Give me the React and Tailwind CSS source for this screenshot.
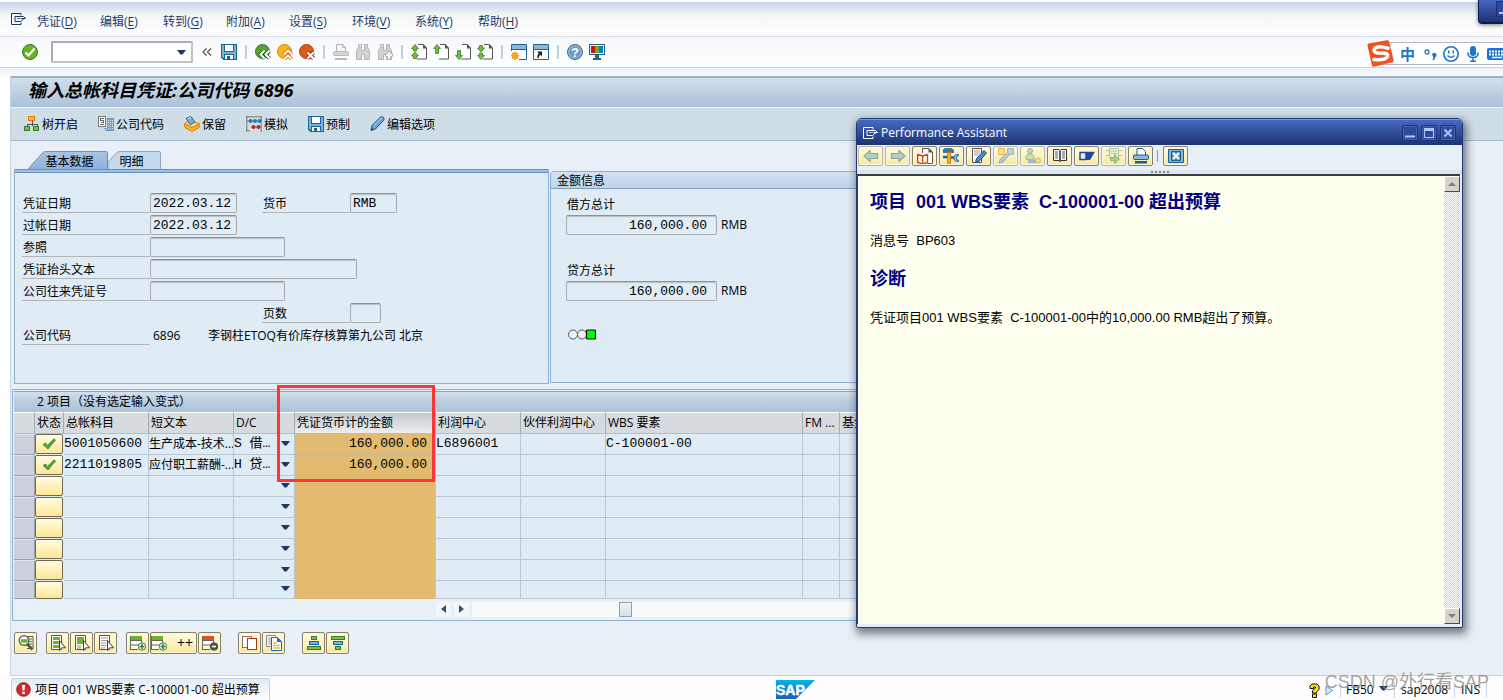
import React from "react";

function Svg({ children, w = 16, h = 16, className = "", crisp = false }) {
  return (
    <svg
      width={w}
      height={h}
      viewBox={`0 0 ${w} ${h}`}
      fill="none"
      aria-hidden="true"
      shapeRendering={crisp ? "crispEdges" : "auto"}
      className={`block shrink-0 ${className}`}
    >
      {children}
    </svg>
  );
}

const DownArrow = ({ className = "" }) => (
  <Svg w={9} h={5} className={className}>
    <path d="M0 0h9L5.500 4.500h-2z" fill="#1f3864" />
  </Svg>
);

const CommandMark = ({ color = "#1f3864" }) => (
  <Svg w={15} h={12}>
    <path d="M10 2.500V.5H.5v11H10V9.500" stroke={color} />
    <path d="M4 3.500h8.500l2 2h-4M4 3.500v5h5.500l3.500-3" stroke={color} />
    <path d="M6 5.500h4" stroke={color} strokeWidth=".7" />
  </Svg>
);

const CheckCircle = () => (
  <Svg>
    <circle cx="8" cy="8" r="7.500" fill="#6cb026" stroke="#2f7d3a" />
    <path d="M3.500 8.500l3 3 6-7" stroke="#fff" strokeWidth="2.200" />
  </Svg>
);

const DoubleLeft = () => (
  <Svg>
    <path d="M7.500 4.500L4 8l3.500 3.500M12 4.500L8.500 8l3.500 3.500" stroke="#555" strokeWidth="1.300" />
  </Svg>
);

const SaveIcon = () => (
  <Svg crisp>
    <path d="M0 0h16v16H2l-2-2z" fill="#1b6595" />
    <path d="M1 1h2v7h10V1h2v14h-2v-5H3v5l-2-2z" fill="#7fb0d6" />
    <path d="M3 8h10v2H3z" fill="#7fb0d6" />
    <path d="M4 1h8v6H4z" fill="#fff" />
    <path d="M4 11h8v4H4z" fill="#fff" />
    <path d="M6 12h3v3H6z" fill="#1b6595" />
  </Svg>
);

const BackIcon = () => (
  <Svg>
    <circle cx="7.500" cy="7.500" r="7" fill="#58a32b" stroke="#2f7d3a" />
    <path d="M9.500 6.500L5.500 10.500l4 4M14.500 6.500l-4 4 4 4" stroke="#2f6b34" strokeWidth="3.600" />
    <path d="M9.500 6.500L5.500 10.500l4 4M14.500 6.500l-4 4 4 4" stroke="#fff" strokeWidth="1.800" />
  </Svg>
);
const ExitIcon = () => (
  <Svg>
    <circle cx="7.500" cy="7.500" r="7" fill="#fbb416" stroke="#dd8407" />
    <path d="M7 10.500l4-4 4 4M7 15.500l4-4 4 4" stroke="#d9730d" strokeWidth="3.600" />
    <path d="M7 10.500l4-4 4 4M7 15.500l4-4 4 4" stroke="#fff" strokeWidth="1.800" />
  </Svg>
);
const CancelIcon = () => (
  <Svg>
    <circle cx="7.500" cy="7.500" r="7" fill="#dc5a1c" stroke="#b5400f" />
    <path d="M8.500 8.500l6 6M14.500 8.500l-6 6" stroke="#9f3410" strokeWidth="4" />
    <path d="M8.500 8.500l6 6M14.500 8.500l-6 6" stroke="#fff" strokeWidth="2.200" />
  </Svg>
);

const GreyPrinter = () => (
  <Svg>
    <path d="M3.500 7V.5h6l3 3V7" stroke="#b5b5b5" fill="#f6f6f6" />
    <path d="M9.500.5v3h3" stroke="#b5b5b5" />
    <rect x=".5" y="7.500" width="15" height="4" rx="1" fill="#d5d5d5" stroke="#b9b9b9" />
    <path d="M2 14h12v2H2z" fill="#b9b9b9" />
  </Svg>
);
const Binoculars = ({ plus = false }) => (
  <Svg>
    <path
      d="M3.500.5h3v2h-1M3.500.5v3l-2 3v9h5v-5h3v5h5v-9l-2-3v-3h-3v6h-3v-6z"
      fill="#d2d2d2"
      stroke="#b5b5b5"
    />
    {plus && (
      <path d="M10.500 7.500h3v2h2v3h-2v3h-3v-3h-2v-3h2z" fill="#f5f5f5" stroke="#b5b5b5" />
    )}
  </Svg>
);

const PageIcon = ({ kind }) => (
  <Svg>
    <path d="M7 .5h5.500l3 3.500v11H6" stroke="#555" fill="#fff" />
    <path d="M12 0v4.500h4z" fill="#555" />
    {kind === "first" && (
      <g fill="#7cbb2b" stroke="#2f7d3a" strokeWidth=".8">
        <path d="M4 .5L.5 4.500h2V7h3V4.500h2z" />
        <path d="M4 8L.5 12h2v2.500h3V12h2z" />
      </g>
    )}
    {kind === "prev" && (
      <path d="M4 .5L.5 4.500h2V9.500h3V4.500h2z" fill="#7cbb2b" stroke="#2f7d3a" strokeWidth=".8" />
    )}
    {kind === "next" && (
      <path d="M4 15.500L.5 11.500h2V6.500h3v5h2z" fill="#7cbb2b" stroke="#2f7d3a" strokeWidth=".8" />
    )}
    {kind === "last" && (
      <g fill="#7cbb2b" stroke="#2f7d3a" strokeWidth=".8">
        <path d="M4 8L.5 4h2V1.500h3V4h2z" />
        <path d="M4 15.500L.5 11.500h2V9h3v2.500h2z" />
      </g>
    )}
  </Svg>
);

const WindowIcon = ({ star = false }) => (
  <Svg>
    <path d="M.5.5h15v15H.5z" fill="#fff" stroke="#1b6595" />
    <path d="M1 1h14v4H1z" fill="#8fb6d8" />
    <path d="M1 5.500h14" stroke="#1b6595" />
    {star ? (
      <g>
        <path d="M0 7h8v9H0z" fill="#fff" />
        <path
          d="M4 7.500l1 2 2-.8-.8 2 2 1-2 1 .8 2-2-.7-1 2-1-2-2 .7.800-2-2-1 2-1-.8-2 2 .8z"
          fill="#fba414"
          stroke="#ee8a10"
          strokeWidth=".6"
        />
      </g>
    ) : (
      <path d="M4 7.500h5v5L7.300 10.800Q5.500 12 6 14H4.300Q3.500 11 5.700 9.200z" fill="#222" />
    )}
  </Svg>
);

const HelpIcon = () => (
  <Svg>
    <circle cx="8" cy="8" r="7.500" fill="#6e9cc4" stroke="#3a6b96" />
    <circle cx="8" cy="8" r="6.300" stroke="#b9d1e6" strokeWidth=".7" />
    <text x="8" y="12.500" textAnchor="middle" fontSize="13" fontWeight="700" fill="#fff" fontFamily="Liberation Sans">?</text>
  </Svg>
);
const MonitorIcon = () => (
  <Svg crisp>
    <path d="M0 0h16v11H0z" fill="#1b6595" />
    <path d="M1 1h14v9H1z" fill="#eaf2f8" />
    <path d="M2 2h4v7H2z" fill="#d31010" />
    <path d="M6 2h4v7H6z" fill="#63b020" />
    <path d="M10 2h4v7h-4z" fill="#1a7cc9" />
    <path d="M6 11h4v3H6zM4 14h8v2H4z" fill="#1b6595" />
  </Svg>
);

const TreeIcon = () => (
  <Svg crisp>
    <path d="M8 5v5M3 11V8h10v3" stroke="#555" />
    <rect x="4.500" y=".5" width="6" height="4" fill="#fcc21b" stroke="#e2761b" />
    <rect x=".5" y="10.500" width="5" height="4" fill="#7cbb2b" stroke="#2f7d3a" />
    <rect x="9.500" y="10.500" width="5" height="4" fill="#7cbb2b" stroke="#2f7d3a" />
  </Svg>
);
const CompanyIcon = () => (
  <Svg crisp>
    <rect x="9" y="2" width="7" height="13" fill="#6d9fca" />
    <path d="M10 4h1M12 4h1M14 4h1M10 6h1M12 6h1M14 6h1M10 8h1M12 8h1M14 8h1M10 10h1M12 10h1M14 10h1M10 12h1M12 12h1M14 12h1" stroke="#d7e7f3" />
    <rect x=".5" y=".5" width="7" height="10" fill="#fff" stroke="#777" />
    <path d="M5.500 2.500h-3v2h3v2h-3M2 8.500h4" stroke="#666" />
    <path d="M6 12h3M7 14h2" stroke="#6d9fca" />
  </Svg>
);
const HoldIcon = () => (
  <Svg>
    <path d="M.8 7.500L8 11.500l7.200-4v4L8 15.500l-7.200-4z" fill="#fbb416" stroke="#e07a12" />
    <path d="M.8 7.500l5-3 9.400 3L8 11.500z" fill="#fde08a" stroke="#e07a12" />
    <path d="M2 2.500L7 .5l4 5.500-4.500 3z" fill="#7fa9cf" stroke="#34648f" />
    <path d="M3.500 3l3.500-1.500" stroke="#d6e6f3" />
  </Svg>
);
const SimulateIcon = () => (
  <Svg>
    <path d="M.8 0v15.500M0 .8h16M15.200 0v16M0 14.800h4M1 5h14M5 11h10" stroke="#777" />
    <g fill="#2a78b0">
      <circle cx="4.500" cy="5" r="2" /><circle cx="9" cy="5" r="2" /><circle cx="13.500" cy="5" r="2" />
    </g>
    <g fill="#c02516">
      <circle cx="7.500" cy="11" r="2" /><circle cx="12.500" cy="11" r="2" />
    </g>
  </Svg>
);
const PencilIcon = () => (
  <Svg w={15}>
    <path d="M1 14.500l1-5L10.500 1l2-.5 1.700 1.700-.5 2L5.500 13z" fill="#6fa3cf" stroke="#1e5f8f" />
    <path d="M4 9.500L11.500 2" stroke="#c1d9ec" />
    <path d="M1 14.500l.8-3 2.400 2.300z" fill="#1e4a70" />
  </Svg>
);

const GreenCheck = () => (
  <Svg w={15} h={12}>
    <path d="M1 6.500l2.500-1.500 2 2.500L12 .8l1.500 1.200L6 11z" fill="#58a836" stroke="#2f7d3a" strokeWidth=".8" />
  </Svg>
);

const DetailIcon = () => (
  <Svg>
    <path d="M7 1.500h8v12H9" stroke="#555" fill="#fff" />
    <path d="M10 4h4M11 6.500h3M11 9h3" stroke="#6fb32a" strokeWidth="1.500" />
    <circle cx="6" cy="5.500" r="4.700" fill="#fff" stroke="#666" strokeWidth="1.600" />
    <path d="M3 4.200h6.500v3.500H3z" fill="#6fb32a" />
    <path d="M9 9l5.500 5.500" stroke="#555" strokeWidth="2.800" />
  </Svg>
);
const SelectIcon = ({ kind }) => (
  <Svg>
    <path d="M1.500.5h10v14h-10z" fill="#fff" stroke="#555" />
    {kind === "all" && <path d="M3 3.500h7M3 7.500h6M3 11.500h6" stroke="#6fb32a" strokeWidth="3" />}
    {kind === "block" && (
      <g>
        <path d="M3 2h7v7H3z" fill="#6fb32a" />
        <path d="M3 11h4M3 13h4" stroke="#888" />
      </g>
    )}
    {kind === "none" && <path d="M3 3h7M3 5.500h7M3 8h5M3 10.500h5M3 13h4" stroke="#999" />}
    <path d="M9.500 5.500v10l2.200-2.700h3.800z" fill="#fff" stroke="#444" />
  </Svg>
);
const RowIcon = ({ remove = false }) => (
  <Svg>
    <path d="M1 5h11v9H1z" fill="#fff" opacity=".7" />
    <path d="M.5 1v14M0 5.500h12M1 10h10M1 14.500h7M11.500 5v4" stroke="#666" />
    <path d="M1 1h11v4H1z" fill={remove ? "#e2541b" : "#6fb32a"} />
    <circle cx="12" cy="11.500" r="3.700" fill={remove ? "#555" : "#fff"} stroke={remove ? "#444" : "#2f7d3a"} />
    <path d={remove ? "M10 11.500h4" : "M9.500 11.500h5M12 9v5"} stroke={remove ? "#fff" : "#2f7d3a"} strokeWidth="1.600" />
  </Svg>
);
const CutIcon = () => (
  <Svg crisp>
    <rect x=".5" y="1.500" width="9" height="11" fill="#fff" stroke="#777" />
    <rect x="5.500" y="3.500" width="9" height="11" fill="#fff" stroke="#b3301a" />
  </Svg>
);
const PasteIcon = () => (
  <Svg>
    <path d="M.5.5h9v11h-9z" fill="#fff" stroke="#888" />
    <path d="M2 3h5M2 5h4M2 7h4M2 9h4" stroke="#999" />
    <path d="M5.500 2.500h6l4 4v9h-10z" fill="#fff" stroke="#1a6aa6" />
    <path d="M11 2.500v4.500h4.500z" fill="#1a6aa6" />
    <path d="M7 8h4M7 10.500h7M7 13h7" stroke="#e7c13a" strokeWidth="1.400" />
  </Svg>
);
const SortIcon = ({ down = false }) => (
  <Svg>
    <rect x={down ? 1.5 : 5.5} y="1.500" width={down ? 13 : 5} height="3" fill="#7fbf3a" stroke="#2f7d3a" />
    <rect x="3.500" y="6.500" width="9" height="3" fill="#7fb0d6" stroke="#1b6595" />
    <rect x={down ? 5.5 : 1.5} y="11.500" width={down ? 5 : 13} height="3" fill="#7fbf3a" stroke="#2f7d3a" />
  </Svg>
);

const ArrowH = ({ flip = false }) => (
  <Svg className={flip ? "rotate-180" : ""}>
    <path d="M1 8l6-5.500v3h7.500v5H7v3z" fill="#b3cfc0" stroke="#85a9a0" strokeWidth="1.200" />
  </Svg>
);
const BookPage = () => (
  <Svg>
    <path d="M5.500 5V.5h6.500l3.500 3.500v11.500h-5" fill="#fff" stroke="#555" />
    <path d="M11.500 0v4.500H16z" fill="#555" />
    <path d="M.7 6.500l5 1.500 4.800-1.500v8L5.700 16l-5-1.500z" fill="#fff" stroke="#d2471b" strokeWidth="1.400" />
    <path d="M5.700 8v7.500" stroke="#d2471b" strokeWidth="1.400" />
  </Svg>
);
const ToolsIcon = () => (
  <Svg w={17}>
    <path d="M0 2l2-1.500h6.500l2 1.500v2.500H0z" fill="#2f7fae" stroke="#1b5f8c" strokeWidth=".7" />
    <path d="M4.500 4.500h3v11h-3z" fill="#fbb416" stroke="#e07a12" />
    <path d="M0 9h4M8 9.500h3" stroke="#1b6595" strokeWidth="2.500" />
    <path d="M16 7a3.500 3.500 0 1 0 0 6l-2-1.200q-1.500-1.600 0-3.600z" fill="#9ec3de" stroke="#1b6595" />
  </Svg>
);
const EditPage = () => (
  <Svg>
    <path d="M1.500.5h9v14h-9z" fill="#fff" stroke="#555" />
    <path d="M3 3h6M3 5h6M3 7h4" stroke="#999" />
    <path d="M4.500 14.500l1-4L13 2.500l2.500 2.500L8.500 13z" fill="#4f8fc0" stroke="#1a4f7c" />
  </Svg>
);
const FadedEdit = () => (
  <Svg>
    <path d="M.5.5h6v6h-6z" fill="#f6e08d" stroke="#e0b860" />
    <path d="M9.500.5h6v6h-6z" fill="#bcd3dd" stroke="#9ab5bf" />
    <path d="M1 15l1.500-4L9.500 4.500l2 2L5 14z" fill="#b9cdd0" stroke="#8ea7aa" />
  </Svg>
);
const FadedPerson = () => (
  <Svg>
    <circle cx="5" cy="3" r="2.500" fill="#c5d3c0" stroke="#9aab99" />
    <path d="M1 11.500V8l2-2h4l2 2v3.500z" fill="#cfdcab" stroke="#a6b792" />
    <path d="M3 13.500h8" stroke="#9cbac4" strokeWidth="3" />
    <circle cx="13" cy="12.500" r="2.500" fill="#f7dc90" stroke="#e4b267" />
  </Svg>
);
const OpenBook = () => (
  <Svg>
    <path d="M1.500 1.500h5.500l1 1 1-1h5.500v11H9l-1 1-1-1H1.500z" fill="#fff" stroke="#333" />
    <path d="M8 2.500v11" stroke="#333" strokeWidth="1.600" />
    <path d="M3 4h3M3 6h3M3 8h3M3 10h3M10 4h3M10 6h3M10 8h3M10 10h3" stroke="#555" />
  </Svg>
);
const BlueShape = () => (
  <Svg>
    <path d="M1 4.500h6v7H1z" fill="#dfe9f7" stroke="#24459a" strokeWidth="1.500" />
    <path d="M7 3.700h9L11 12H7z" fill="#24459a" />
  </Svg>
);
const FadedList = () => (
  <Svg>
    <path d="M3.500.5h9v9h-9z" fill="#f8f3cf" stroke="#aebaae" />
    <path d="M0 2.500h3M12.500 2.500H16M0 7.500h3M12.500 7.500H16M5 3h6M5 5.500h6" stroke="#aebaae" />
    <path d="M4.500 9.500h4v-3l5 4.500-5 4.500v-3h-4z" fill="#acd08a" stroke="#87b377" />
  </Svg>
);
const BluePrinter = () => (
  <Svg>
    <path d="M4 7V.5h5.500l3 3V7" fill="#fff" stroke="#1b5f8c" />
    <rect x=".5" y="7" width="15" height="4.500" rx="1" fill="#8fb6d8" stroke="#1b5f8c" />
    <path d="M2 13h12v2.500H2z" fill="#1b5f8c" />
  </Svg>
);
const ClosePanelIcon = () => (
  <Svg>
    <path d="M.5 1.500h15v13H.5z" fill="#8fb6d8" stroke="#1b5f8c" />
    <path d="M3.500 3.500h9v9h-9z" fill="#5e93bf" stroke="#1b5f8c" />
    <path d="M5 5l6 6M11 5l-6 6" stroke="#fff" strokeWidth="2" />
  </Svg>
);

const menus = [
  ["凭证", "D"],
  ["编辑", "E"],
  ["转到", "G"],
  ["附加", "A"],
  ["设置", "S"],
  ["环境", "V"],
  ["系统", "Y"],
  ["帮助", "H"],
];

const ToolSep = () => <span className="mx-[2px] h-[14px] w-[2px] bg-[#bcd0e4]" />;

function IconButton({ label, children }) {
  return (
    <button type="button" aria-label={label} className="flex h-4 w-4 shrink-0 items-center justify-center">
      {children}
    </button>
  );
}

function MenuBar() {
  return (
    <nav aria-label="菜单" className="flex h-[35px] shrink-0 items-center border-b border-[#d9dfe8] bg-linear-to-b from-[#c6d4e8] via-[#f4f6f9] via-40% to-white pt-[6px] pl-[11px] text-[#1f3864]">
      <div className="mb-[6px] w-[26px]">
        <CommandMark />
      </div>
      {menus.map(([name, key]) => (
        <button key={key} type="button" className="w-[63px] shrink-0 text-left leading-4 whitespace-nowrap">
          {name}(<span className="underline underline-offset-2">{key}</span>)
        </button>
      ))}
    </nav>
  );
}

function StandardToolbar() {
  return (
    <div className="flex h-[31px] shrink-0 items-center gap-[6px] border-b border-[#cfd2d8] bg-linear-to-b from-[#f7f8fa] to-white pl-[22px]">
      <IconButton label="回车"><CheckCircle /></IconButton>
      <div className="ml-[7px] flex h-[22px] w-[142px] items-center rounded-[2px] border-2 border-[#a9adb1] border-r-[#bfc3c7] border-b-[#bfc3c7] bg-white pr-[5px]">
        <input aria-label="命令字段" className="h-full min-w-0 flex-1 bg-transparent px-1 outline-none" />
        <button type="button" aria-label="命令历史"><DownArrow /></button>
      </div>
      <IconButton label="收起"><DoubleLeft /></IconButton>
      <IconButton label="保存"><SaveIcon /></IconButton>
      <ToolSep />
      <IconButton label="返回"><BackIcon /></IconButton>
      <IconButton label="退出"><ExitIcon /></IconButton>
      <IconButton label="取消"><CancelIcon /></IconButton>
      <ToolSep />
      <IconButton label="打印"><GreyPrinter /></IconButton>
      <IconButton label="查找"><Binoculars /></IconButton>
      <IconButton label="继续查找"><Binoculars plus /></IconButton>
      <ToolSep />
      <IconButton label="第一页"><PageIcon kind="first" /></IconButton>
      <IconButton label="上一页"><PageIcon kind="prev" /></IconButton>
      <IconButton label="下一页"><PageIcon kind="next" /></IconButton>
      <IconButton label="最后一页"><PageIcon kind="last" /></IconButton>
      <ToolSep />
      <IconButton label="新建会话"><WindowIcon star /></IconButton>
      <IconButton label="快捷方式"><WindowIcon /></IconButton>
      <ToolSep />
      <IconButton label="帮助"><HelpIcon /></IconButton>
      <IconButton label="定制布局"><MonitorIcon /></IconButton>
    </div>
  );
}

const actions = [
  ["树开启", TreeIcon],
  ["公司代码", CompanyIcon],
  ["保留", HoldIcon],
  ["模拟", SimulateIcon],
  ["预制", SaveIcon],
  ["编辑选项", PencilIcon],
];

function Field({ id, width, value = "", right = false }) {
  return (
    <input
      id={id}
      readOnly
      defaultValue={value}
      className={`h-5 rounded-[2px] border border-[#a9adb1] border-t-[#8f9396] bg-[#e1ecf5] px-[2px] font-['Liberation_Mono','Noto_Sans_CJK_SC',monospace] text-[13px] leading-4 text-black shadow-[inset_0_1px_1px_#b9c2c9] outline-none ${width} ${right ? "pr-[9px] text-right" : ""}`}
    />
  );
}

function FieldLabel({ htmlFor, width = "w-[128px]", children }) {
  return (
    <label htmlFor={htmlFor} className={`flex h-5 shrink-0 items-end border-b border-[#b3b6b9] pl-px leading-[17px] ${width}`}>
      {children}
    </label>
  );
}

function Tabs() {
  return (
    <div role="tablist" className="flex h-[18px] pl-[17px]">
      <button role="tab" aria-selected="true" type="button" className="relative h-[18px] w-[80px]">
        <svg className="absolute inset-0" width="80" height="18" viewBox="0 0 80 18" aria-hidden="true">
          <defs>
            <linearGradient id="tabOn" x1="0" y1="0" x2="0" y2="1">
              <stop offset="0" stopColor="#a9c5e4" />
              <stop offset="1" stopColor="#8db2db" />
            </linearGradient>
          </defs>
          <path d="M0 18L14 2.500Q15.500.5 18 .5H78.500Q79.500.5 79.500 2V18" fill="url(#tabOn)" stroke="#6d93ba" />
        </svg>
        <span className="relative block pl-[3px] leading-[22px]">基本数据</span>
      </button>
      <button role="tab" aria-selected="false" type="button" className="relative h-[18px] w-[53px]">
        <svg className="absolute inset-0" width="53" height="18" viewBox="0 0 53 18" aria-hidden="true">
          <path d="M0 18V11L8 2.500Q9.500.5 12 .5H51.500Q52.500.5 52.500 2V18" fill="#c3d9ec" stroke="#84a5c6" />
        </svg>
        <span className="relative block pr-[6px] leading-[22px]">明细</span>
      </button>
    </div>
  );
}

function BasicData() {
  return (
    <section className="w-[535px] shrink-0 border-x border-b border-[#8fb1d3] bg-[#dfebf5] pb-[36px]">
      <div className="h-1 border-y border-[#6590bd] bg-[#9fc0e0]" />
      <div className="flex flex-col gap-[2px] pt-5 pl-[7px]">
        <div className="flex">
          <FieldLabel htmlFor="docDate">凭证日期</FieldLabel>
          <Field id="docDate" width="w-[87px]" value="2022.03.12" />
          <span className="w-[25px]" />
          <FieldLabel htmlFor="currency" width="w-[88px]">货币</FieldLabel>
          <Field id="currency" width="w-[47px]" value="RMB" />
        </div>
        <div className="flex">
          <FieldLabel htmlFor="postDate">过帐日期</FieldLabel>
          <Field id="postDate" width="w-[87px]" value="2022.03.12" />
        </div>
        <div className="flex">
          <FieldLabel htmlFor="reference">参照</FieldLabel>
          <Field id="reference" width="w-[135px]" />
        </div>
        <div className="flex">
          <FieldLabel htmlFor="headText">凭证抬头文本</FieldLabel>
          <Field id="headText" width="w-[207px]" />
        </div>
        <div className="flex">
          <FieldLabel htmlFor="crossNo">公司往来凭证号</FieldLabel>
          <Field id="crossNo" width="w-[135px]" />
        </div>
        <div className="flex pl-[240px]">
          <FieldLabel htmlFor="pages" width="w-[88px]">页数</FieldLabel>
          <Field id="pages" width="w-[31px]" />
        </div>
        <div className="flex">
          <div className="flex h-5 w-[128px] shrink-0 items-end border-b border-[#b3b6b9] pl-px leading-[17px]">公司代码</div>
          <span className="w-[58px] pl-[3px] leading-[22px]">6896</span>
          <span className="leading-[22px] whitespace-nowrap">李钢柱ETOQ有价库存核算第九公司 北京</span>
        </div>
      </div>
    </section>
  );
}

function AmountInfo() {
  return (
    <section className="mt-[2px] mb-px ml-px min-w-0 flex-1 rounded-tl-[3px] border border-[#8fb1d3] bg-[#dfebf5]">
      <h2 className="h-[17px] border-b border-[#7f9fc2] bg-linear-to-b from-[#d3e2f0] to-[#bdd4ea] pl-[6px] leading-[18px]">金额信息</h2>
      <div className="flex flex-col pl-[15px]">
        <label htmlFor="debit" className="mt-[7px] h-[19px] pl-px leading-[17px]">借方总计</label>
        <div className="flex items-center gap-[4px]">
          <Field id="debit" width="w-[151px]" value="160,000.00" right />
          <span>RMB</span>
        </div>
        <label htmlFor="credit" className="mt-[27px] h-[19px] pl-px leading-[17px]">贷方总计</label>
        <div className="flex items-center gap-[4px]">
          <Field id="credit" width="w-[151px]" value="160,000.00" right />
          <span>RMB</span>
        </div>
        <div className="mt-[28px] pl-[2px]">
          <Svg w={28} h={11}>
            <circle cx="5" cy="5.500" r="4.500" fill="#f1f1f1" stroke="#555" />
            <circle cx="14" cy="5.500" r="4.500" fill="#f1f1f1" stroke="#555" />
            <rect x="18.500" y="1" width="9" height="9" rx="1" fill="#00ff00" stroke="#111" strokeWidth="1.200" />
          </Svg>
        </div>
      </div>
    </section>
  );
}

const headers = ["", "状态", "总帐科目", "短文本", "D/C", "凭证货币计的金额", "利润中心", "伙伴利润中心", "WBS 要素", "FM ...", "基金"];
const rows = [
  { ok: true, account: "5001050600", text: "生产成本-技术...", dc: "S 借…", amount: "160,000.00", profit: "L6896001", wbs: "C-100001-00" },
  { ok: true, account: "2211019805", text: "应付职工薪酬-...", dc: "H 贷…", amount: "160,000.00" },
  {}, {}, {}, {}, {}, {},
];

const cell = "overflow-hidden border-r border-b border-[#b9c7d4] p-0 whitespace-nowrap";
const mono = "font-['Liberation_Mono','Noto_Sans_CJK_SC',monospace] text-[13px] leading-4";

function Items() {
  return (
    <section className="relative mt-[5px] mr-[80px] ml-px border border-[#8fb1d3] p-px">
      <h2 className="h-[21px] border-t border-[#8aa5bf] bg-linear-to-b from-[#d2e0ee] via-[#b9cddc] to-[#abc4de] pl-[23px] leading-[20px]">
        2 项目（没有选定输入变式）
      </h2>
      <div className="overflow-hidden">
        <table className="w-full table-fixed border-separate border-spacing-0">
          <colgroup>
            <col className="w-[21px]" />
            <col className="w-[29px]" />
            <col className="w-[85px]" />
            <col className="w-[85px]" />
            <col className="w-[61px]" />
            <col className="w-[141px]" />
            <col className="w-[85px]" />
            <col className="w-[85px]" />
            <col className="w-[197px]" />
            <col className="w-[37px]" />
            <col />
          </colgroup>
          <thead>
            <tr className="h-[22px]">
              {headers.map((h, i) => (
                <th
                  key={h + i}
                  scope="col"
                  className={`overflow-hidden border-t border-r border-b border-t-white border-r-[#a3abb3] border-b-[#b4bcc4] p-0 pl-[2px] text-left leading-4 font-normal whitespace-nowrap ${i === 5 ? "bg-linear-to-b from-[#c3c8cc] to-[#eceef0]" : "bg-[#d6dbdf]"}`}
                >
                  {h}
                </th>
              ))}
            </tr>
          </thead>
          <tbody>
            {rows.map((r, i) => (
              <tr key={i} className={i === 7 ? "h-[18px]" : "h-[21px]"}>
                <td className="border-t border-r border-b border-t-[#e1e4ea] border-r-[#9aa0ab] border-b-[#9aa0ab] bg-[#cbd0da] p-0" />
                <td className="bg-[#dfebf5] p-0 align-top">
                  <button
                    type="button"
                    aria-label={`状态 ${i + 1}`}
                    className={`flex w-[28px] items-center justify-center rounded-[2px] border border-[#6f6a58] bg-linear-to-b from-[#fffbe3] via-[#fff2b8] to-[#fde794] ${i === 7 ? "h-[18px]" : "h-5"}`}
                  >
                    {r.ok && <GreenCheck />}
                  </button>
                </td>
                <td className={`${cell} ${mono} bg-[#dfebf5]`}>{r.account}</td>
                <td className={`${cell} bg-[#dfebf5] leading-4`}>{r.text}</td>
                <td className={`${cell} bg-[#dfebf5]`}>
                  <div className="flex items-center">
                    <select
                      aria-label={`借贷 ${i + 1}`}
                      className={`${mono} min-w-0 flex-1 appearance-none bg-transparent outline-none`}
                    >
                      <option>{r.dc || ""}</option>
                    </select>
                    <DownArrow className="mr-1 mb-[2px]" />
                  </div>
                </td>
                <td className={`overflow-hidden border-r border-b border-r-[#b9c7d4] p-0 pr-2 text-right whitespace-nowrap ${mono} bg-[#e2bb70] ${i < 2 ? "border-b-[#c3ba95]" : "border-b-[#e2bb70]"}`}>
                  {r.amount}
                </td>
                <td className={`${cell} ${mono} bg-[#dfebf5]`}>{r.profit}</td>
                <td className={`${cell} bg-[#dfebf5]`} />
                <td className={`${cell} ${mono} bg-[#dfebf5]`}>{r.wbs}</td>
                <td className={`${cell} bg-[#dfebf5]`} />
                <td className={`${cell} bg-[#dfebf5]`} />
              </tr>
            ))}
          </tbody>
        </table>
      </div>
      <div className="flex h-5 items-center gap-[3px] pl-[422px]">
        <button type="button" aria-label="向左滚动" className="flex h-[15px] w-[15px] items-center justify-center bg-[#f4f7fa]">
          <Svg w={5} h={8}><path d="M5 0v8L0 4z" fill="#33536b" /></Svg>
        </button>
        <button type="button" aria-label="向右滚动" className="flex h-[15px] w-[15px] items-center justify-center bg-[#f4f7fa]">
          <Svg w={5} h={8}><path d="M0 0v8l5-4z" fill="#33536b" /></Svg>
        </button>
        <div className="flex h-[15px] flex-1 bg-[#fafafa] pl-[147px]">
          <span className="h-[15px] w-[13px] border border-[#8e9eb0] bg-linear-to-b from-[#f0f4f8] to-[#d3dfeb]" />
        </div>
      </div>
      <div className="pointer-events-none absolute -top-[5px] left-[264px] h-[97px] w-[158px] border-3 border-[#fb3636]" />
    </section>
  );
}

const yellow =
  "flex items-center rounded-[2px] border bg-linear-to-b from-[#fffbe0] via-[#fdf3c0] to-[#f8e69a] shadow-[inset_0_0_0_1px_#fff8d6]";

function RowButton({ label, wide = false, children }) {
  return (
    <button
      type="button"
      aria-label={label}
      className={`${yellow} h-[22px] border-[#85806c] ${wide ? "w-[47px] justify-between pr-[3px]" : "w-[23px] justify-center"}`}
    >
      {children}
    </button>
  );
}

function RowToolbar() {
  return (
    <div className="flex gap-px pt-[11px] pl-[3px]">
      <RowButton label="明细"><DetailIcon /></RowButton>
      <span className="w-[7px]" />
      <RowButton label="全选"><SelectIcon kind="all" /></RowButton>
      <RowButton label="选择块"><SelectIcon kind="block" /></RowButton>
      <RowButton label="取消选择"><SelectIcon kind="none" /></RowButton>
      <span className="w-[7px]" />
      <RowButton label="插入行"><RowIcon /></RowButton>
      <RowButton label="插入多行" wide>
        <RowIcon />
        <span className="text-[14px] leading-4">++</span>
      </RowButton>
      <RowButton label="删除行"><RowIcon remove /></RowButton>
      <span className="w-[15px]" />
      <RowButton label="复制"><CutIcon /></RowButton>
      <RowButton label="粘贴"><PasteIcon /></RowButton>
      <span className="w-[15px]" />
      <RowButton label="升序"><SortIcon /></RowButton>
      <RowButton label="降序"><SortIcon down /></RowButton>
    </div>
  );
}

const helpTools = [
  ["后退", () => <ArrowH />, true],
  ["前进", () => <ArrowH flip />, true],
  ["应用帮助", BookPage],
  ["技术信息", ToolsIcon],
  ["编辑文档", EditPage],
  ["定制", FadedEdit, true],
  ["权限", FadedPerson, true],
  ["词汇", OpenBook],
  ["SAP 门户", BlueShape],
  ["转换", FadedList, true],
  ["打印", BluePrinter],
];

function WinButton({ label, children }) {
  return (
    <button type="button" aria-label={label} className="flex h-4 w-4 items-center justify-center rounded-[2px] border border-[#1a3273] bg-[#2c4a9c] shadow-[inset_0_0_0_1px_#4563b4]">
      {children}
    </button>
  );
}

function ScrollButton({ label, down = false }) {
  return (
    <button type="button" aria-label={label} className="flex h-4 w-4 items-center justify-center border border-t-white border-r-[#4a4a4a] border-b-[#4a4a4a] border-l-white bg-[#d6d3cc]">
      <Svg w={8} h={4} className={down ? "rotate-180" : ""}>
        <path d="M4 0l4 4H0z" fill="#808080" />
      </Svg>
    </button>
  );
}

function PerformanceAssistant() {
  return (
    <section
      aria-label="Performance Assistant"
      className="absolute top-[118px] right-[40px] flex h-[510px] w-[607px] flex-col overflow-hidden rounded-t-[6px] rounded-b-[2px] border border-[#1d3a78] bg-[#e8eff6] shadow-[2px_4px_9px_2px_rgba(20,30,50,0.55)]"
    >
      <header className="flex h-[26px] shrink-0 items-center gap-[3px] border-t border-[#7c99dd] bg-linear-to-b from-[#4769c2] to-[#1c3474] pr-[6px] pl-[6px] text-white">
        <CommandMark color="#ffffff" />
        <h2 className="flex-1 text-[12px] leading-4">Performance Assistant</h2>
        <div className="flex gap-[3px]">
          <WinButton label="最小化"><Svg w={10} h={10}><path d="M0 8.500h10" stroke="#b3c8ff" strokeWidth="2" /></Svg></WinButton>
          <WinButton label="最大化">
            <Svg w={10} h={10}><path d="M.5 1v8.500h9V1" stroke="#b3c8ff" /><path d="M0 1.500h10" stroke="#b3c8ff" strokeWidth="3" /></Svg>
          </WinButton>
          <WinButton label="关闭"><Svg w={10} h={10}><path d="M1.500 1.500l7 7M8.500 1.500l-7 7" stroke="#a9c2ff" strokeWidth="2.200" /></Svg></WinButton>
        </div>
      </header>
      <div className="flex h-[25px] shrink-0 items-center gap-[2px] pb-[3px] pl-px">
        {helpTools.map(([label, Icon, faded]) => (
          <button key={label} type="button" aria-label={label} className={`${yellow} h-5 w-[25px] justify-center ${faded ? "border-[#b9b49a]" : "border-[#85806c]"}`}>
            <Icon />
          </button>
        ))}
        <span className="mr-[3px] ml-[2px] h-3 w-px bg-[#9a9a9a]" />
        <button type="button" aria-label="关闭面板" className={`${yellow} h-5 w-[25px] justify-center border-[#85806c]`}>
          <ClosePanelIcon />
        </button>
      </div>
      <div className="flex h-1 shrink-0 items-center justify-center gap-[2px] bg-[#dbe5ec]">
        {[0, 1, 2, 3, 4].map((n) => (
          <span key={n} className="h-[2px] w-[2px] bg-[#7c8792]" />
        ))}
      </div>
      <div className="mr-[2px] mb-[3px] flex min-h-0 flex-1 border-t-2 border-l border-[#3f3f3f] bg-[#ffffef]">
        <article className="flex-1 pt-4 pl-3 font-['Liberation_Sans','Noto_Sans_CJK_SC',sans-serif] text-[13px] leading-4 whitespace-pre text-black">
          <h1 className="text-[18px] leading-5 font-bold text-[#000080]">{"项目  001 WBS要素  C-100001-00 超出预算"}</h1>
          <p className="mt-[21px]">{"消息号  BP603"}</p>
          <h2 className="mt-[20px] text-[18px] leading-5 font-bold text-[#000080]">诊断</h2>
          <p className="mt-[21px]">{"凭证项目001 WBS要素  C-100001-00中的10,000.00 RMB超出了预算。"}</p>
        </article>
        <div className="flex w-4 flex-col justify-between bg-[repeating-conic-gradient(#d4d0c8_0%_25%,#ffffff_0%_50%)] bg-size-[2px_2px]">
          <ScrollButton label="向上滚动" />
          <ScrollButton label="向下滚动" down />
        </div>
      </div>
    </section>
  );
}

function InputMethodBar() {
  return (
    <div className="absolute top-[39px] right-0 flex h-[29px] w-[137px] items-center text-[#1a74cc]">
      <div className="absolute inset-y-[3px] right-0 left-[14px] border-y border-[#b4b6c2] bg-white" />
      <Svg w={29} h={29} className="relative">
        <path d="M1.500 6.500Q1 5 2.500 4.500L21 1.200q1.700-.3 2.100 1.300l4.500 18.500q.4 1.700-1.200 2.200L8 27.800q-1.700.3-2-1.300z" fill="#f4511e" />
        <path
          d="M22 9.200Q14 6.500 9.500 8.800Q6.500 11.500 9.500 13.300Q12 14.300 16 14Q22.500 14 21.500 17.500Q19.500 21.500 8 20.500"
          stroke="#fff"
          strokeWidth="3.600"
          strokeLinecap="round"
        />
      </Svg>
      <span className="relative ml-[5px] w-[24px] shrink-0 font-['Noto_Sans_CJK_SC',sans-serif] text-[15px] leading-4 font-bold">中</span>
      <Svg w={15} h={16} className="relative">
        <circle cx="3" cy="6" r="2" stroke="#1a74cc" strokeWidth="1.300" />
        <path d="M8 8.500a2.300 2.300 0 1 1 3.500 2.500Q11 14 8 14.500q1.500-1.500 1.200-3.500z" fill="#1a74cc" />
      </Svg>
      <Svg w={16} className="relative ml-[4px]">
        <circle cx="8" cy="8" r="7.200" stroke="#1a74cc" strokeWidth="1.600" />
        <path d="M5.800 4.500v3M10.200 4.500v3M4.500 9.500q3.500 3.500 7 0" stroke="#1a74cc" strokeWidth="1.500" />
      </Svg>
      <Svg w={12} className="relative ml-[8px]">
        <rect x="3" y="0" width="6" height="10" rx="3" fill="#1a74cc" />
        <path d="M.8 6.500q0 5 5.200 5t5.200-5M6 11.500v4M3 15.200h6" stroke="#1a74cc" strokeWidth="1.500" />
      </Svg>
      <Svg w={20} h={12} className="relative ml-[8px]">
        <rect x="0" y="0" width="20" height="12" rx="2" fill="#1a74cc" />
        <path d="M2 3.500h16M2 6.500h16" stroke="#fff" strokeWidth="2" strokeDasharray="2 1" />
        <path d="M5 9.500h10" stroke="#fff" strokeWidth="1.500" />
      </Svg>
    </div>
  );
}

function StatusBar() {
  return (
    <footer className="flex h-6 shrink-0 items-end bg-[#fdfdfe] pl-[11px]">
      <div className="flex h-[22px] w-[259px] items-center gap-[4px] rounded-t-[3px] border-t border-r border-l border-[#c3d1e0] bg-linear-to-b from-[#e3ebf4] to-white pl-[4px]">
        <Svg w={15} h={15}>
          <circle cx="7.500" cy="7.500" r="6.800" fill="#d42a2e" stroke="#8e2226" />
          <path d="M6 3h3l-.5 5.500h-2zM6.200 9.700h2.600v2.300H6.200z" fill="#fff" />
        </Svg>
        <span className="leading-4 whitespace-nowrap">项目 001 WBS要素 C-100001-00 超出预算</span>
      </div>
      <Svg w={40} h={20} className="ml-[505px]">
        <defs>
          <linearGradient id="sapBlue" x1="0" y1="0" x2="0" y2="1">
            <stop offset="0" stopColor="#00b4ea" />
            <stop offset="1" stopColor="#1c5fbf" />
          </linearGradient>
        </defs>
        <path d="M1 0h39L21 19H1z" fill="url(#sapBlue)" />
        <text x="1" y="15" fontSize="14" fontWeight="700" fill="#fff" stroke="#fff" strokeWidth=".5" fontFamily="Liberation Sans">SAP</text>
      </Svg>
      <div className="ml-auto flex h-[22px] items-center pt-[2px] pr-[16px]">
        <Svg w={11} h={15}>
          <path d="M1 5.500V3l2-2h5l2 2v3.500L7.500 9v1h-4V7.500l3-2.500V4H4.500v1.500z" fill="#ffe600" stroke="#111" />
          <path d="M3.500 11h4v3.500h-4z" fill="#ffe600" stroke="#111" />
        </Svg>
        <Svg w={9} h={11} className="mr-[6px] ml-[5px]">
          <path d="M1 1l6.500 4.500L1 10z" fill="#d7e8f6" stroke="#6a9ac4" />
        </Svg>
        <span className="mr-[5px] h-4 w-px bg-[#cfd8e2]" />
        <span className="w-[33px] leading-5">FB50</span>
        <DownArrow className="mb-[3px]" />
        <span className="mx-[6px] h-4 w-px bg-[#cfd8e2]" />
        <span className="w-[47px] leading-5">sap2008</span>
        <span className="mx-[6px] h-4 w-px bg-[#cfd8e2]" />
        <span className="w-[20px] leading-5">INS</span>
        <span className="ml-[5px] h-4 w-px bg-[#cfd8e2]" />
      </div>
    </footer>
  );
}

export default function App() {
  return (
    <div className="relative flex min-h-screen flex-col overflow-hidden bg-white pt-[2px] font-['Open_Sans','Noto_Sans_CJK_SC',sans-serif] text-[12px] leading-4 text-black">
      <MenuBar />
      <StandardToolbar />
      <div className="h-[8px] shrink-0 bg-linear-to-b from-[#eef1f7] to-[#fafbfd]" />
      <main className="ml-[10px] flex flex-1 flex-col rounded-bl-[2px] border-b border-l border-[#c9d3e0] bg-[#e8eff6]">
        <h1 className="h-[31px] border-t-2 border-[#9cb1c6] bg-linear-to-b from-[#d0e0ee] via-[#bfd0df] to-[#aac2dc] pl-[17px] text-[18px] leading-[25px] font-bold italic">
          输入总帐科目凭证:公司代码 6896
        </h1>
        <div className="flex h-[34px] shrink-0 items-center gap-5 border-t border-b border-t-[#eef4f8] border-b-[#a3b6ca] bg-[#cfdde7] pl-[13px]">
          {actions.map(([label, Icon]) => (
            <button key={label} type="button" className="flex shrink-0 items-center gap-[2px]">
              <Icon />
              <span className="pt-0.5 leading-4">{label}</span>
            </button>
          ))}
        </div>
        <div className="pt-[10px]">
          <Tabs />
          <div className="mr-[80px] flex pl-[3px]">
            <BasicData />
            <AmountInfo />
          </div>
        </div>
        <Items />
        <RowToolbar />
      </main>
      <StatusBar />

      <PerformanceAssistant />
      <InputMethodBar />
      <div className="absolute top-0 right-0 flex h-[24px] w-[25px] justify-end overflow-hidden rounded-bl-[4px] border-b-2 border-l border-[#0f1c4a] bg-linear-to-b from-[#4769c2] to-[#1c3474] shadow-[0_1px_4px_rgba(0,0,0,0.5)]">
        <button type="button" aria-label="最小化" className="mt-px flex h-4 w-[7px] items-end border border-r-0 border-[#1a3273] bg-[#2c4a9c] pb-[2px] pl-[2px]">
          <span className="h-[2px] w-[5px] bg-[#b3c8ff]" />
        </button>
      </div>
      <div className="pointer-events-none absolute right-[14px] bottom-[8px] font-['Liberation_Sans','Noto_Sans_CJK_SC',sans-serif] text-[18px] leading-5 whitespace-nowrap text-[#8c8c8c]/80">
        CSDN @外行看SAP
      </div>
    </div>
  );
}
